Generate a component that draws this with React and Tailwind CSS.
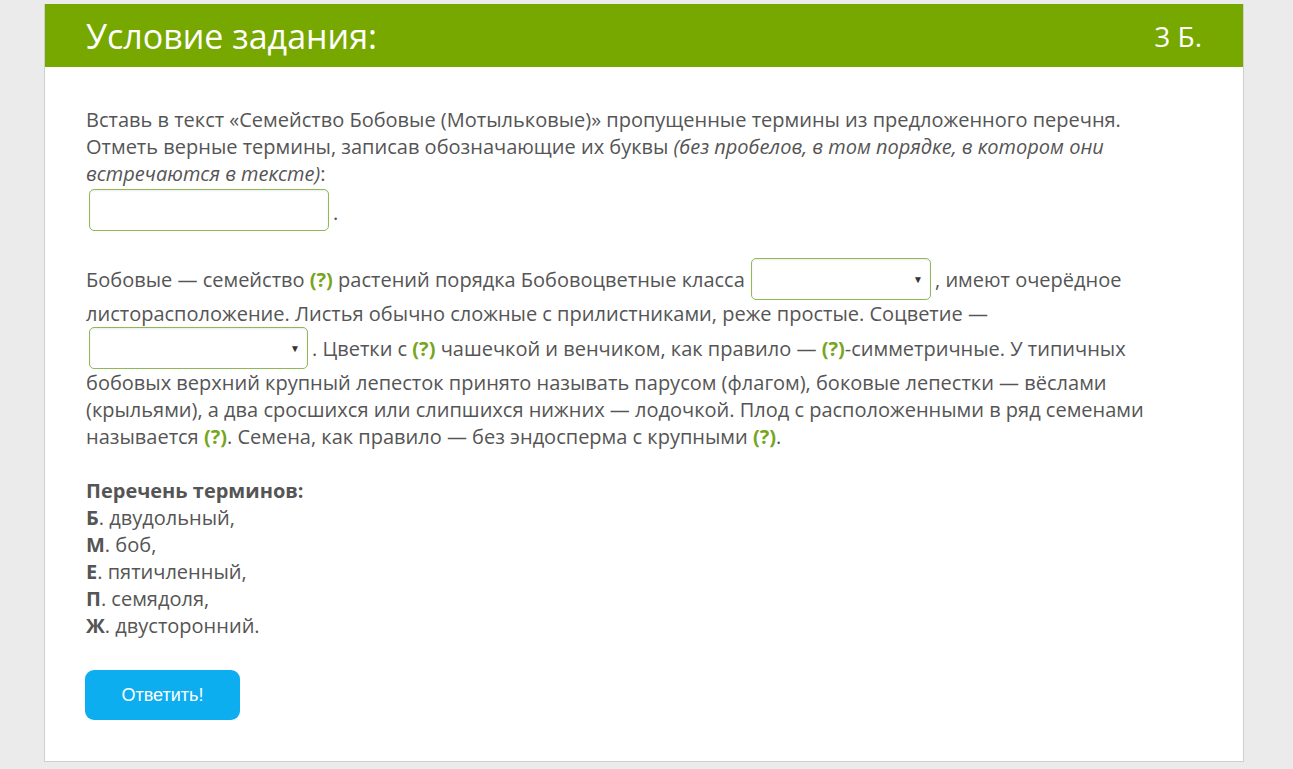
import React from "react";

const Q = () => <span className="font-bold text-[#76a621]">(?)</span>;

const Select = ({ w, cls }) => (
  <span
    className={`relative inline-block align-[-13px] h-[42px] ${w} ${cls} rounded-[5px] border border-[#8fb957] bg-white shadow-[inset_0_1px_2px_rgba(0,0,0,0.08)]`}
  >
    <span className="absolute right-[7px] top-[15px] text-[10px] text-[#333] leading-none">▼</span>
  </span>
);

export default function App() {
  return (
    <div className="min-h-[769px] bg-[#ebebeb] pt-[4px]" style={{ fontFamily: '"Open Sans", "Liberation Sans", sans-serif' }}>
      <div className="ml-[44px] w-[1200px] bg-white border border-t-0 border-[#cfcfcf] pb-[41px]">
        <div className="h-[63px] bg-[#76a800] flex items-center justify-between pl-[41px] pr-[41px]">
          <span className="text-white text-[34px] leading-none">Условие задания:</span>
          <span className="text-white text-[28px] leading-none">3 Б.</span>
        </div>
        <div className="pl-[41px] pr-[80px] pt-[39px] text-[20px] leading-[27px] text-[#555]">
          <p>
            Вставь в текст «Семейство Бобовые (Мотыльковые)» пропущенные термины из предложенного перечня.
            <br />
            Отметь верные термины, записав обозначающие их буквы{" "}
            <i>(без пробелов, в том порядке, в котором они встречаются в тексте)</i>:
          </p>
          <div className="flex items-center mt-[2px]">
            <span className="ml-[3px] inline-block h-[42px] w-[240px] rounded-[5px] border border-[#8fb957] shadow-[inset_0_1px_2px_rgba(0,0,0,0.08)]" />
            <span className="ml-[4px] mt-[4px]">.</span>
          </div>
          <p className="mt-[27px]">
            Бобовые — семейство <Q /> растений порядка Бобовоцветные класса{" "}
            <Select w="w-[180px]" cls="ml-[1px] mr-[4px]" />, имеют очерёдное листорасположение. Листья обычно сложные с прилистниками, реже простые. Соцветие —{" "}
            <Select w="w-[219px]" cls="ml-[3px] mr-[4px]" />. Цветки с <Q /> чашечкой и венчиком, как правило — <Q />-симметричные. У типичных бобовых верхний крупный лепесток принято называть парусом (флагом), боковые лепестки — вёслами (крыльями), а два сросшихся или слипшихся нижних — лодочкой. Плод с расположенными в ряд семенами называется <Q />. Семена, как правило — без эндосперма с крупными <Q />.
          </p>
          <div className="mt-[27px]">
            <div className="font-bold">Перечень терминов:</div>
            <div><b>Б</b>. двудольный,</div>
            <div><b>М</b>. боб,</div>
            <div><b>Е</b>. пятичленный,</div>
            <div><b>П</b>. семядоля,</div>
            <div><b>Ж</b>. двусторонний.</div>
          </div>
          <button
            className="mt-[31px] h-[50px] w-[155px] rounded-[9px] bg-[#0caef0] text-white text-[18px] -ml-[1px]"
            style={{ fontFamily: '"Liberation Sans", Arial, sans-serif' }}
          >
            Ответить!
          </button>
        </div>
      </div>
    </div>
  );
}
